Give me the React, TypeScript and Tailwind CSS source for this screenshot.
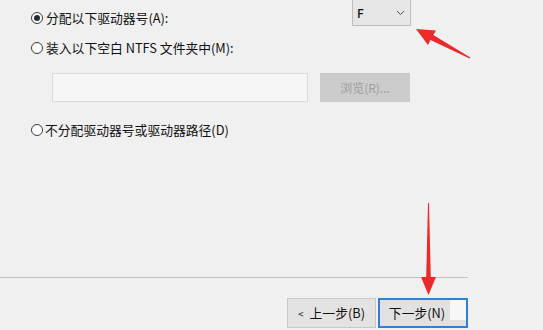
import React from "react";

const font = { fontFamily: '"Noto Sans CJK SC", "Noto Sans", sans-serif' };

function Radio({ checked }: { checked?: boolean }) {
  return (
    <div className="w-[12px] h-[12px] rounded-full border border-[#3a3a3a] bg-white flex items-center justify-center shrink-0">
      {checked && <div className="w-[6px] h-[6px] rounded-full bg-[#2a2a2a]" />}
    </div>
  );
}

export default function App() {
  return (
    <div
      className="relative w-[543px] h-[330px] overflow-hidden bg-[#f0f0f0] text-[#111111] text-[12.8px] font-normal flex flex-col"
      style={font}
    >
      {/* Row 1 */}
      <div className="flex items-start">
        <div className="w-[352px] h-[36px] flex items-center pl-[31px] gap-[3px]">
          <Radio checked />
          <span>分配以下驱动器号(A):</span>
        </div>
        <div className="w-[59px] h-[26px] bg-[#e6e6e6] border border-[#bdbdbd] border-t-0 flex items-center justify-between pl-[4px] pr-[5px]">
          <span className="text-[12px] font-medium">F</span>
          <svg width="9" height="6" viewBox="0 0 9 6">
            <path d="M1 1 L4.5 4.5 L8 1" fill="none" stroke="#555" strokeWidth="1" />
          </svg>
        </div>
      </div>

      {/* Row 2 */}
      <div className="h-[24px] flex items-center pl-[31px] gap-[3px]">
        <Radio />
        <span>装入以下空白 NTFS 文件夹中(M):</span>
      </div>

      {/* Row 3 */}
      <div className="mt-[13px] flex pl-[52px] gap-[12px]">
        <div className="w-[256px] h-[29px] bg-[#f6f6f6] border border-[#d9d9d9]" />
        <div className="w-[90px] h-[29px] bg-[#cccccc] text-[#9e9e9e] text-[12px] flex items-center justify-center">
          浏览(R)...
        </div>
      </div>

      {/* Row 4 */}
      <div className="mt-[16px] h-[24px] flex items-center pl-[31px] gap-[2px]">
        <Radio />
        <span>不分配驱动器号或驱动器路径(D)</span>
      </div>

      {/* Separator */}
      <div className="mt-[135px] w-[468px] h-px bg-[#c4c4c4]" />

      {/* Buttons */}
      <div className="mt-[20px] flex pl-[287px] gap-[2px]">
        <div className="w-[89px] h-[30px] bg-[#e3e3e3] border border-[#c8c8c8] flex items-center justify-center gap-[6px]">
          <span className="text-[10px]">&lt;</span>
          <span>上一步(B)</span>
        </div>
        <div className="w-[90px] h-[30px] bg-[#e1e1e1] border-2 border-[#2f80d6] flex items-start">
          <span className="flex-1 h-full flex items-center justify-center pl-[4px]">下一步(N)</span>
          <div className="w-[16px] h-[20px] bg-[#f7f7f7]" />
        </div>
      </div>

      {/* Red arrows overlay */}
      <svg className="absolute left-0 top-0 pointer-events-none" width="543" height="330" viewBox="0 0 543 330">
        <polygon
          points="416,29 436,30.5 433.3,34.9 470.4,57.6 469.6,58.6 430.5,40.1 428,45"
          fill="#ec2a2a"
        />
        <polygon
          points="428,203 429,203 430.8,277 436,277 428.5,295 421,277 426.2,277"
          fill="#ec2a2a"
        />
      </svg>
    </div>
  );
}
